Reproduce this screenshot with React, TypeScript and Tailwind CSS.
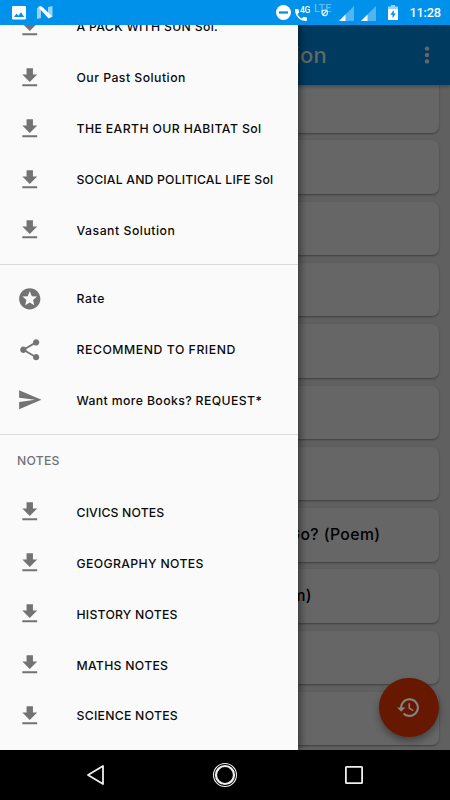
import React from "react";

const DOWNLOAD = "M19 9h-4V3H9v6H5l7 7 7-7zM5 18v2h14v-2H5z";
const STAR =
  "M11.99 2C6.47 2 2 6.48 2 12s4.47 10 9.99 10C17.52 22 22 17.52 22 12S17.52 2 11.99 2zm4.24 16L12 15.45 7.77 18l1.12-4.81-3.73-3.23 4.92-.42L12 5l1.92 4.53 4.92.42-3.73 3.23L16.23 18z";
const SHARE =
  "M18 16.08c-.76 0-1.44.3-1.96.77L8.91 12.7c.05-.23.09-.46.09-.7s-.04-.47-.09-.7l7.05-4.11c.54.5 1.25.81 2.04.81 1.66 0 3-1.34 3-3s-1.34-3-3-3-3 1.34-3 3c0 .24.04.47.09.7L8.04 9.81C7.5 9.31 6.79 9 6 9c-1.66 0-3 1.34-3 3s1.34 3 3 3c.79 0 1.5-.31 2.04-.81l7.12 4.16c-.05.21-.08.43-.08.65 0 1.61 1.31 2.92 2.92 2.92 1.61 0 2.92-1.31 2.92-2.92s-1.31-2.92-2.92-2.92z";
const SEND = "M2.01 21L23 12 2.01 3 2 10l15 2-15 2z";
const HISTORY =
  "M13 3c-4.97 0-9 4.03-9 9H1l3.89 3.89.07.14L9 12H6c0-3.87 3.13-7 7-7s7 3.13 7 7-3.13 7-7 7c-1.93 0-3.68-.79-4.94-2.06l-1.42 1.42C8.27 19.99 10.51 21 13 21c4.97 0 9-4.03 9-9s-4.03-9-9-9zm-1 5v5l4.28 2.54.72-1.21-3.5-2.08V8H12z";
const CALL =
  "M6.62 10.79c1.44 2.83 3.76 5.14 6.59 6.59l2.2-2.2c.27-.27.67-.36 1.02-.24 1.12.37 2.33.57 3.57.57.55 0 1 .45 1 1V20c0 .55-.45 1-1 1-9.39 0-17-7.61-17-17 0-.55.45-1 1-1h3.5c.55 0 1 .45 1 1 0 1.25.2 2.45.57 3.57.11.35.03.74-.25 1.02l-2.2 2.2z";

function Icon({ d, className }: { d: string; className: string }) {
  return (
    <svg viewBox="0 0 24 24" fill="currentColor" className={className}>
      <path d={d} />
    </svg>
  );
}

type Entry = { label: string; icon: string; tracking: string };

const SOLUTIONS: Entry[] = [
  { label: "A PACK WITH SUN Sol.", icon: DOWNLOAD, tracking: "tracking-[0.31px]" },
  { label: "Our Past Solution", icon: DOWNLOAD, tracking: "tracking-[0.47px]" },
  { label: "THE EARTH OUR HABITAT Sol", icon: DOWNLOAD, tracking: "tracking-[0.39px]" },
  { label: "SOCIAL AND POLITICAL LIFE Sol", icon: DOWNLOAD, tracking: "tracking-[0.18px]" },
  { label: "Vasant Solution", icon: DOWNLOAD, tracking: "tracking-[0.52px]" },
];

const ACTIONS: Entry[] = [
  { label: "Rate", icon: STAR, tracking: "tracking-[0.6px]" },
  { label: "RECOMMEND TO FRIEND", icon: SHARE, tracking: "tracking-[0.54px]" },
  { label: "Want more Books? REQUEST*", icon: SEND, tracking: "tracking-[0.38px]" },
];

const NOTES: Entry[] = [
  { label: "CIVICS NOTES", icon: DOWNLOAD, tracking: "tracking-[0.15px]" },
  { label: "GEOGRAPHY NOTES", icon: DOWNLOAD, tracking: "tracking-[0.35px]" },
  { label: "HISTORY NOTES", icon: DOWNLOAD, tracking: "tracking-[0.22px]" },
  { label: "MATHS NOTES", icon: DOWNLOAD, tracking: "tracking-[0.28px]" },
  { label: "SCIENCE NOTES", icon: DOWNLOAD, tracking: "tracking-[0.26px]" },
];

function Rows({ items }: { items: Entry[] }) {
  return (
    <ul>
      {items.map((item) => (
        <li key={item.label} className="flex h-[50.9px] items-center pl-[17px]">
          <Icon d={item.icon} className="mb-[0.8px] size-[25.5px] shrink-0 text-[#737373]" />
          <span
            className={`mt-[1px] ml-[34px] whitespace-nowrap text-[12.25px] font-medium text-[#0a0a0a] ${item.tracking}`}
          >
            {item.label}
          </span>
        </li>
      ))}
    </ul>
  );
}

function Signal({ className }: { className: string }) {
  return (
    <svg viewBox="0 0 15 15" className={className}>
      <path d="M15 0v15H0z" fill="#fff" opacity=".32" />
      <path d="M6.5 8.5V15H0z" fill="#fff" />
    </svg>
  );
}

function StatusBar() {
  return (
    <header className="flex h-[25px] shrink-0 items-center bg-[#0091ea] text-white">
      <svg viewBox="0 0 14 14" className="ml-3 size-[14px]">
        <rect width="14" height="13.5" rx="1.3" fill="#fff" />
        <path d="M2 11l2.6-3.4 1.8 2.1L9 6.2l3.2 4.8z" fill="#0091ea" />
      </svg>
      <svg viewBox="0 0 16 13" className="ml-[11px] h-[13px] w-4">
        <path d="M0 2l4-1.5V12L0 13zM11 1l4.5-1v10.5L11 12z" fill="#fff" opacity=".6" />
        <path d="M1 .8L4.6.2 15.3 10.4l-3.7 2.2z" fill="#fff" />
      </svg>
      <svg viewBox="0 0 16 16" className="ml-[223px] size-[15px]">
        <circle cx="8" cy="8" r="8" fill="#fff" />
        <rect x="3.2" y="6.8" width="9.6" height="2.4" fill="#0091ea" />
      </svg>
      <div className="relative ml-[3px] h-[15px] w-[18px]">
        <Icon d={CALL} className="mt-[1.5px] -ml-px size-[16px]" />
        <span className="absolute top-0 left-[6px] font-['Roboto'] text-[8.5px] leading-[10px] font-medium tracking-[-0.3px]">
          4G
        </span>
      </div>
      <div className="relative ml-[2px] h-[15px] w-5">
        <span className="absolute top-[-2px] left-0 font-['Roboto'] text-[10.5px] leading-[12px] font-medium tracking-[0.2px] text-white/40">
          LTE
        </span>
        <svg viewBox="0 0 8 8" className="absolute top-[4px] left-[7px] size-[7.5px]">
          <circle cx="4" cy="4" r="3" fill="#0091ea" stroke="#fff" strokeWidth="1.2" />
          <path d="M2 6l4-4" stroke="#fff" strokeWidth="1.1" />
        </svg>
      </div>
      <Signal className="mt-[2px] ml-[5px] size-[15px]" />
      <Signal className="mt-[2px] ml-[7px] size-[15px]" />
      <svg viewBox="0 0 10 15" className="ml-[12px] h-[15px] w-[10px]">
        <path d="M3 0h4v1.5h3V15H0V1.5h3z" fill="#fff" opacity=".6" />
        <path d="M0 4h10v11H0z" fill="#fff" />
        <path d="M5.8 5L2.3 9.8h2.2v3.4l3.3-4.7H5.8z" fill="#0091ea" />
      </svg>
      <span className="mt-[1px] ml-[11.5px] font-['Roboto'] text-[12.75px] leading-none font-medium tracking-[-0.2px]">
        11:28
      </span>
    </header>
  );
}

const CHAPTERS = [
  { title: "", width: "" },
  { title: "", width: "" },
  { title: "", width: "" },
  { title: "", width: "" },
  { title: "", width: "" },
  { title: "", width: "" },
  { title: "", width: "" },
  { title: "Where Do All the Teachers Go? (Poem)", width: "w-[380.5px]" },
  { title: "The Wonderful Words (Poem)", width: "w-[312px]" },
  { title: "", width: "" },
  { title: "", width: "" },
];

function ChapterScreen() {
  return (
    <div className="flex h-full flex-col bg-[#606060]">
      <div className="z-10 flex h-[60px] shrink-0 items-center justify-between bg-[#003a5e] text-[#666666] shadow-[0_2px_3px_rgba(0,0,0,0.25)]">
        <h1 className="w-[327px] text-right text-[22px] font-medium tracking-[0.2px]">Solution</h1>
        <svg viewBox="0 0 6 18" fill="currentColor" className="mr-[20.5px] h-[18px] w-[6px]">
          <circle cx="3" cy="2.6" r="2.2" />
          <circle cx="3" cy="9" r="2.2" />
          <circle cx="3" cy="15.4" r="2.2" />
        </svg>
      </div>
      <div className="min-h-0 flex-1 overflow-hidden">
        <div className="-mt-[5.8px] flex flex-col gap-[7.9px]">
          {CHAPTERS.map((chapter, i) => (
            <div
              key={i}
              className="mr-[11px] flex h-[53.4px] shrink-0 items-center rounded-[7px] bg-[#666666] shadow-[0_1px_2px_rgba(0,0,0,0.35)]"
            >
              <span
                className={`text-right text-[15.75px] font-medium tracking-[0.4px] whitespace-nowrap text-black ${chapter.width}`}
              >
                {chapter.title}
              </span>
            </div>
          ))}
        </div>
      </div>
    </div>
  );
}

export default function App() {
  return (
    <div className="flex h-[800px] w-[450px] flex-col overflow-hidden bg-black font-['Inter','Noto_Sans',sans-serif]">
      <StatusBar />
      <main className="relative h-[724.5px] shrink-0 overflow-hidden">
        <ChapterScreen />
        <button className="absolute top-[652.5px] left-[379px] flex size-[59.5px] items-center justify-center rounded-full bg-[#661800] text-[#858585] shadow-[0_4px_7px_rgba(0,0,0,0.35)]">
          <Icon d={HISTORY} className="size-[25px]" />
        </button>
        <aside className="absolute inset-y-0 left-0 z-20 w-[298px] overflow-hidden bg-[#fafafa] shadow-[2px_0_8px_rgba(0,0,0,0.5)]">
          <div className="-mt-[23.4px]">
            <Rows items={SOLUTIONS} />
            <div className="mt-[8px] mb-[8.3px] h-px bg-[#dadada]" />
            <Rows items={ACTIONS} />
            <div className="mt-[8.3px] h-px bg-[#dadada]" />
            <h2 className="flex h-[51.8px] items-center pl-[17px] text-[12.25px] font-medium tracking-[0.2px] text-[#737373]">
              NOTES
            </h2>
            <Rows items={NOTES} />
          </div>
        </aside>
      </main>
      <nav className="flex flex-1 items-center bg-black text-[#eeeeee]">
        <svg
          viewBox="0 0 20 22"
          className="ml-[86px] h-[22px] w-5"
          fill="none"
          stroke="currentColor"
          strokeWidth="1.8"
          strokeLinejoin="round"
        >
          <path d="M17 2v18L2 11z" />
        </svg>
        <svg viewBox="0 0 26 26" className="ml-[106px] size-[26px]" fill="none" stroke="currentColor">
          <circle cx="13" cy="13" r="11.5" strokeWidth="1.1" />
          <circle cx="13" cy="13" r="9" strokeWidth="2.2" />
        </svg>
        <svg viewBox="0 0 20 20" className="ml-[106px] size-5" fill="none" stroke="currentColor" strokeWidth="1.8">
          <rect x="1.9" y="1.9" width="16.2" height="16.2" rx="0.6" />
        </svg>
      </nav>
    </div>
  );
}
